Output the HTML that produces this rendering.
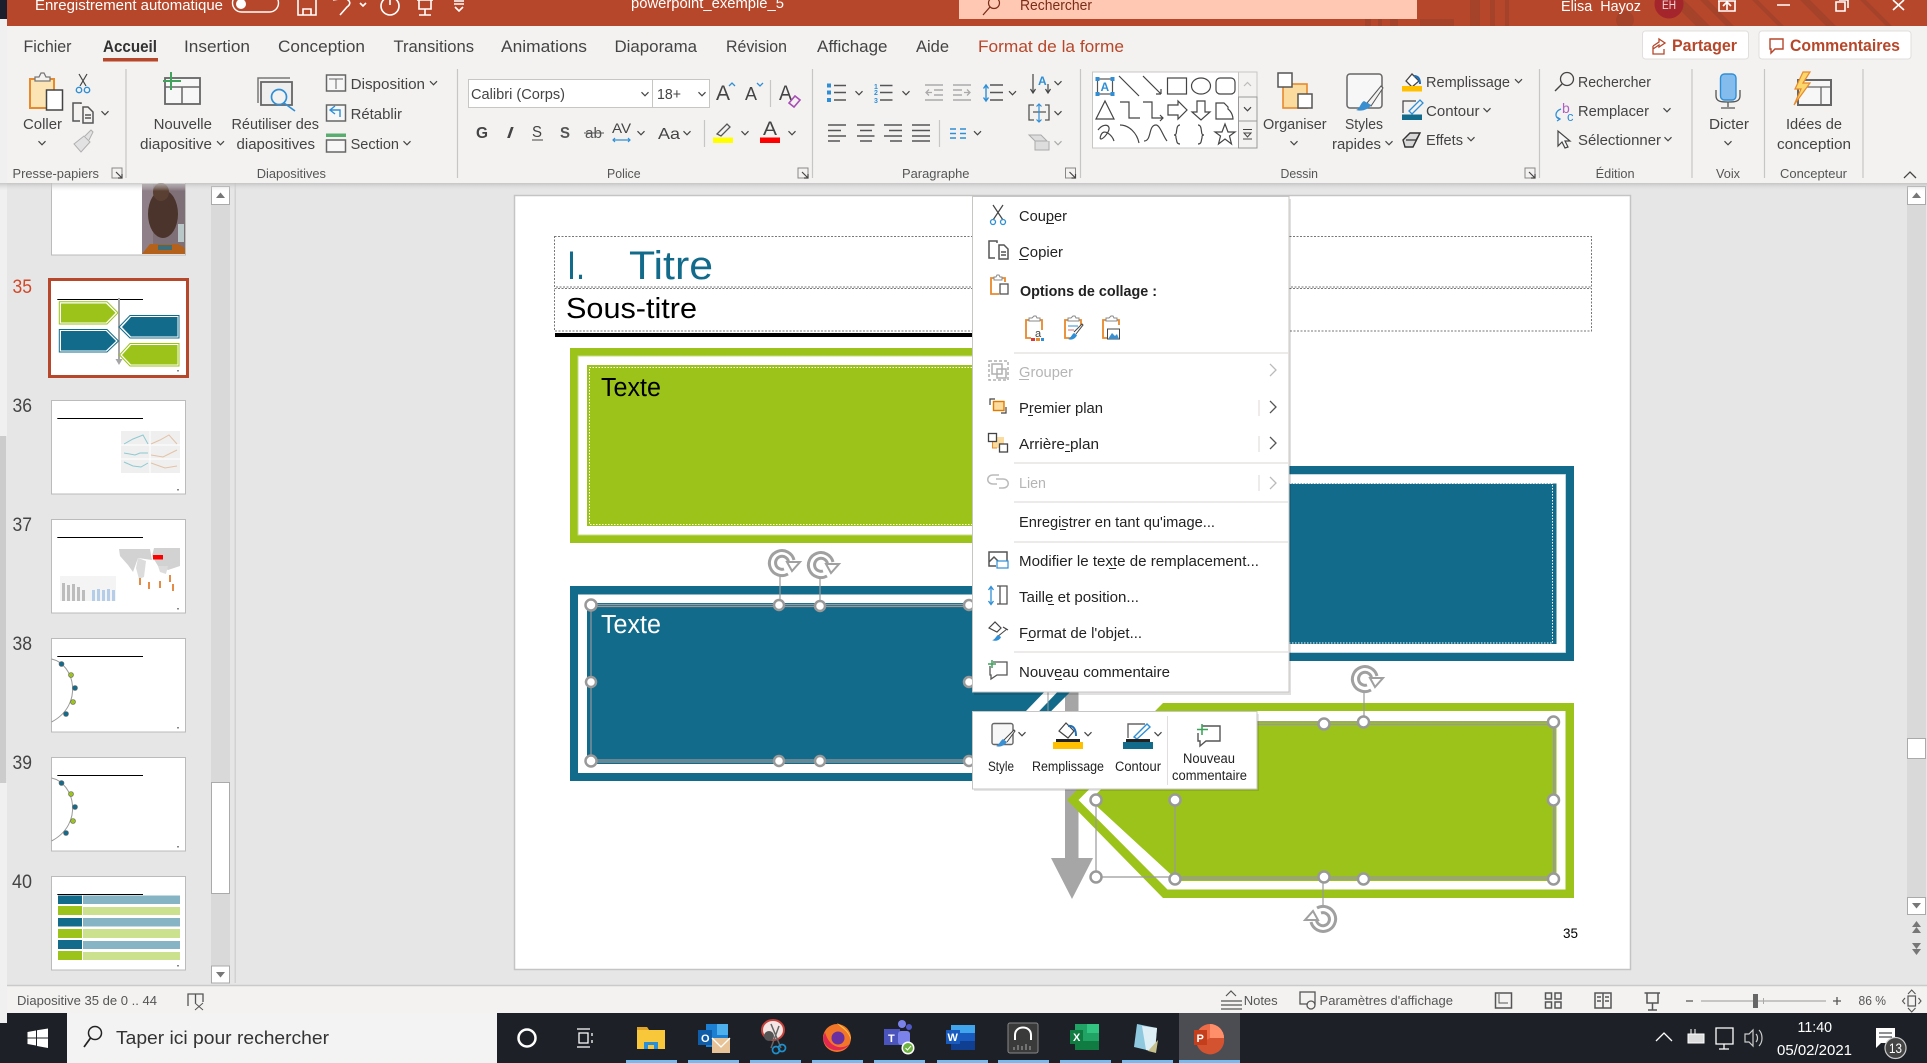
<!DOCTYPE html>
<html lang="fr"><head><meta charset="utf-8"><title>powerpoint_exemple_5</title>
<style>
html,body{margin:0;padding:0;background:#e6e6e6;overflow:hidden;width:1927px;height:1063px}
svg{display:block;position:absolute;left:0;top:0}
text{font-family:"Liberation Sans",sans-serif;white-space:pre}
.r{font-size:15px;fill:#444}
.tb{font-size:17px;fill:#444}
.g{font-size:13px;fill:#555}
.m{font-size:15px;fill:#222}
.d{font-size:15px;fill:#b5b5b5}
.w{font-size:14.5px;fill:#fff}
.s{font-size:13px;fill:#555}
.mt{font-size:13.5px;fill:#222}
.ic{fill:none;stroke:#555;stroke-width:1.5}
.ig{fill:none;stroke:#b0b0b0;stroke-width:1.5}
.wi{fill:none;stroke:#fff;stroke-width:1.6}
.hd{fill:#fff;stroke:#999;stroke-width:2.5}
.ln{stroke:#999;stroke-width:1.2;fill:none}
</style></head><body>
<svg width="1927" height="1063" viewBox="0 0 1927 1063">
<defs>
<path id="c" d="M-3.5-1.8 0 1.8 3.5-1.8" fill="none" stroke="#444" stroke-width="1.2"/>
<path id="cg" d="M-3.5-1.8 0 1.8 3.5-1.8" fill="none" stroke="#aaa" stroke-width="1.2"/>
<g id="launch"><rect x="-5" y="-5" width="10" height="10" fill="none" stroke="#888" stroke-width="1"/><path d="M-1-1 5 5M5 1V5H1" fill="none" stroke="#444" stroke-width="1.2"/></g>
<g id="rot"><circle r="13" fill="#fff"/><path d="M12-3A12.500 12.500 0 1 0 6 11" fill="none" stroke="#a0a0a0" stroke-width="3"/><path d="M6.500-1A6.500 6.500 0 1 0 2 6" fill="none" stroke="#a0a0a0" stroke-width="3"/><path d="M5-1H18L10 8Z" fill="#fff" stroke="#a0a0a0" stroke-width="2"/></g>
<g id="rotl"><circle r="13" fill="#fff"/><path d="M-12 3A12.500 12.500 0 1 0-6-11" fill="none" stroke="#a0a0a0" stroke-width="3"/><path d="M-6.500 1A6.500 6.500 0 1 0-2-6" fill="none" stroke="#a0a0a0" stroke-width="3"/><path d="M-5 1H-18L-10-8Z" fill="#fff" stroke="#a0a0a0" stroke-width="2"/></g>
<path id="sub" d="M-3-6 3 0-3 6" fill="none" stroke="#555" stroke-width="1.3"/>
<path id="subg" d="M-3-6 3 0-3 6" fill="none" stroke="#bbb" stroke-width="1.3"/>
<linearGradient id="sh" x1="0" y1="0" x2="0" y2="1"><stop offset="0" stop-color="#bdbdbd" stop-opacity=".8"/><stop offset="1" stop-color="#e6e6e6" stop-opacity="0"/></linearGradient>
</defs>

<!-- base -->
<rect width="1927" height="1063" fill="#e6e6e6"/>
<rect x="0" y="0" width="7" height="19" fill="#1c1e2e"/>
<rect x="0" y="19" width="7" height="417" fill="#f0f0f0"/>
<rect x="0" y="436" width="6" height="347" fill="#cccccc"/>
<rect x="0" y="783" width="7" height="240" fill="#f0f0f0"/>

<!-- side panel scrollbar -->
<rect x="211" y="186" width="19" height="797" fill="#d9d9d9"/>
<rect x="211.500" y="186.500" width="18" height="18" fill="#fff" stroke="#aaa"/><path d="M216 198H225L220.500 192.500Z" fill="#777"/>
<rect x="211.500" y="782.500" width="18" height="111" fill="#fff" stroke="#aaa"/>
<rect x="211.500" y="966" width="18" height="17" fill="#fff" stroke="#aaa"/><path d="M216 972H225L220.500 977.500Z" fill="#777"/>
<rect x="234.500" y="183" width="1.500" height="800" fill="#d2d2d2"/>

<!-- thumbnails -->
<rect x="51.500" y="183" width="134" height="72" fill="#fff"/><path d="M51.500 183V255H185.500V183" fill="none" stroke="#bbb"/>
<rect x="142" y="184" width="43" height="70" fill="#7f7078"/><rect x="142" y="184" width="11" height="70" fill="#8e7f89"/>
<ellipse cx="163" cy="214" rx="15" ry="24" fill="#4a342c"/><ellipse cx="161" cy="192" rx="8" ry="9" fill="#5a4032"/><path d="M142 254 150 244H178L185 248V254Z" fill="#b3611b"/><path d="M158 245H172V250H158Z" fill="#3d6e7a"/><rect x="178" y="224" width="6" height="18" fill="#b9c7c8"/>
<rect x="49.500" y="279.500" width="138" height="97" fill="#fff" stroke="#b7472a" stroke-width="3"/>
<g fill="#fff" stroke="#bbb"><rect x="51.500" y="400.500" width="134" height="93.500"/><rect x="51.500" y="519.500" width="134" height="93.500"/><rect x="51.500" y="638.500" width="134" height="93.500"/><rect x="51.500" y="757.500" width="134" height="93.500"/><rect x="51.500" y="876.500" width="134" height="93.500"/></g>
<g fill="#444">
<text x="12.500" y="293" textLength="19.500" lengthAdjust="spacingAndGlyphs" style="font-size:19px;fill:#d24726">35</text>
<text x="12.500" y="412" textLength="19.500" lengthAdjust="spacingAndGlyphs" style="font-size:19px">36</text>
<text x="12.500" y="531" textLength="19.500" lengthAdjust="spacingAndGlyphs" style="font-size:19px">37</text>
<text x="12.500" y="650" textLength="19.500" lengthAdjust="spacingAndGlyphs" style="font-size:19px">38</text>
<text x="12.500" y="769" textLength="19.500" lengthAdjust="spacingAndGlyphs" style="font-size:19px">39</text>
<text x="12" y="888" textLength="20" lengthAdjust="spacingAndGlyphs" style="font-size:19px">40</text>
</g>
<path d="M57.300 299.500H143M57.300 418.500H143M57.300 537.500H143M57.300 656.500H143M57.300 775.500H143M57.300 894.500H143" stroke="#000"/>
<!-- t35 -->
<rect x="118" y="298" width="2" height="62" fill="#a6a6a6"/><path d="M115.500 359H122.500L119 365Z" fill="#a6a6a6"/>
<path d="M59.300 301.700H107L118 312.800 107 324H59.300Z" fill="#fff" stroke="#9bc31a"/><path d="M61 303.500H106L115.500 312.800 106 322.500H61Z" fill="#9bc31a"/>
<path d="M59.300 329.500H107L118.500 341 107 352H59.300Z" fill="#fff" stroke="#136b8b"/><path d="M61 331H106L116 341 106 350.500H61Z" fill="#136b8b"/>
<path d="M179 315.500H130L119 327 130 338H179Z" fill="#fff" stroke="#136b8b"/><path d="M177.500 317H131L122 327 131 336.500H177.500Z" fill="#136b8b"/>
<path d="M179 343.500H130L119.500 355 130 366H179Z" fill="#fff" stroke="#9bc31a"/><path d="M177.500 345H131L122 355 131 364.500H177.500Z" fill="#9bc31a"/>
<!-- t36 -->
<rect x="121" y="431" width="59" height="42" fill="#efefef"/><path d="M121 445H180M121 459H180M150 431V473" stroke="#fff"/>
<path d="M124 444 133 439 143 435 148 444" fill="none" stroke="#8ccad0"/><path d="M151 444 160 440 169 435 177 444" fill="none" stroke="#e4c2a6"/><path d="M124 453 135 455 140 453 148 453" fill="none" stroke="#8ccad0"/><path d="M151 455 163 457 177 450" fill="none" stroke="#e4c2a6"/><path d="M124 462 133 466 141 467 148 463" fill="none" stroke="#8ccad0"/><path d="M151 463 165 468 177 466" fill="none" stroke="#e4c2a6"/>
<!-- t37 -->
<path d="M119 549H150L152 560 138 558 133 572 128 565 120 556ZM154 548H180V566L168 570 158 566 152 556Z" fill="#d2d2d2"/>
<path d="M138 558 146 561 144 577 139 579 136 568ZM158 566H168L166 574 160 572Z" fill="#dcdcdc"/>
<rect x="153" y="555" width="10" height="4.500" fill="#f00"/>
<g fill="#e58b45"><rect x="139" y="578" width="2" height="7"/><rect x="148" y="582" width="2" height="7"/><rect x="159" y="581" width="2" height="7"/><rect x="169" y="575" width="2" height="7"/><rect x="172" y="584" width="2" height="7"/></g>
<rect x="60" y="576" width="56" height="25" fill="#f4f4f4"/>
<g fill="#bcbcbc"><rect x="62" y="583" width="3" height="18"/><rect x="67" y="585" width="3" height="16"/><rect x="72" y="584" width="3" height="17"/><rect x="77" y="587" width="3" height="14"/><rect x="82" y="590" width="3" height="11"/></g>
<g fill="#b5cde8"><rect x="92" y="590" width="3" height="11"/><rect x="97" y="589" width="3" height="12"/><rect x="102" y="590" width="3" height="11"/><rect x="107" y="589" width="3" height="12"/><rect x="112" y="590" width="3" height="11"/></g>
<!-- t38,39 -->
<g fill="none" stroke="#999"><path d="M51.500 659C75 664 84 705 51.500 722"/><path d="M51.500 778C75 783 84 824 51.500 841"/></g>
<g stroke="#666" stroke-width=".6">
<circle cx="61.500" cy="664" r="2.500" fill="#136b8b"/><circle cx="71" cy="675" r="2.500" fill="#9bc31a"/><circle cx="75" cy="688" r="2.500" fill="#136b8b"/><circle cx="73" cy="702" r="2.500" fill="#9bc31a"/><circle cx="66" cy="714" r="2.500" fill="#136b8b"/>
<circle cx="61.500" cy="783" r="2.500" fill="#136b8b"/><circle cx="71" cy="794" r="2.500" fill="#9bc31a"/><circle cx="75" cy="807" r="2.500" fill="#136b8b"/><circle cx="73" cy="821" r="2.500" fill="#9bc31a"/><circle cx="66" cy="833" r="2.500" fill="#136b8b"/>
</g>
<!-- t40 -->
<g>
<rect x="58" y="895.500" width="24" height="8.500" fill="#136b8b"/><rect x="83" y="895.500" width="97" height="8.500" fill="#86b4c5"/>
<rect x="58" y="906" width="24" height="9" fill="#9bc31a"/><rect x="83" y="907" width="97" height="8" fill="#cce18d"/>
<rect x="58" y="918" width="24" height="8.500" fill="#136b8b"/><rect x="83" y="918" width="97" height="8.500" fill="#86b4c5"/>
<rect x="58" y="929" width="24" height="9" fill="#9bc31a"/><rect x="83" y="929" width="97" height="9" fill="#cce18d"/>
<rect x="58" y="940" width="24" height="9" fill="#136b8b"/><rect x="83" y="941" width="97" height="8" fill="#86b4c5"/>
<rect x="58" y="951" width="24" height="9" fill="#9bc31a"/><rect x="83" y="952" width="97" height="8" fill="#cce18d"/>
</g>
<g fill="#888"><rect x="177" y="370" width="2" height="1.500"/><rect x="177" y="489" width="2" height="1.500"/><rect x="177" y="608" width="2" height="1.500"/><rect x="177" y="727" width="2" height="1.500"/><rect x="177" y="846" width="2" height="1.500"/><rect x="177" y="965" width="2" height="1.500"/></g>

<!-- slide -->
<rect x="514.500" y="195.500" width="1116" height="774" fill="#fff" stroke="#c4c4c4" stroke-width="1.500"/>
<g fill="none" stroke="#777" stroke-width="1" stroke-dasharray="2 1.500">
<rect x="554.500" y="236.500" width="1037" height="50.500"/><rect x="554.500" y="288.500" width="1037" height="42.500"/>
</g>
<text x="567" y="279" style="font-size:40px;fill:#136b8b" textLength="18" lengthAdjust="spacingAndGlyphs">I.</text>
<text x="629" y="279" style="font-size:40px;fill:#136b8b" textLength="84" lengthAdjust="spacingAndGlyphs">Titre</text>
<text x="566" y="318" style="font-size:29px;fill:#000" textLength="131" lengthAdjust="spacingAndGlyphs">Sous-titre</text>
<rect x="555" y="333" width="730" height="4" fill="#000"/>
<!-- arrow -->
<rect x="1065" y="540" width="13.500" height="320" fill="#a6a6a6"/><path d="M1051 858H1093L1072 899Z" fill="#a6a6a6"/>
<!-- green frame 1 -->
<path d="M570 348H1080V543H570Z" fill="#9bc31a"/><rect x="578" y="356" width="500" height="179" fill="#fff" stroke="#c7dc80"/><rect x="587" y="365" width="480" height="161" fill="#9bc31a"/>
<rect x="589.500" y="367.500" width="470" height="157" fill="none" stroke="#fff" stroke-dasharray="1.500 1.500"/>
<text x="601" y="396" style="font-size:25.500px;fill:#000" textLength="60" lengthAdjust="spacingAndGlyphs">Texte</text>
<!-- teal left -->
<path d="M570 586H982L1079 683 982 781H570Z" fill="#136b8b"/>
<path d="M578 594.500H980L1066 683 980 773H578Z" fill="#fff"/>
<path d="M587 603H975L1053 683 975 764H587Z" fill="#136b8b"/>
<path d="M1048 692V712" stroke="#999"/>
<path class="ln" d="M589 604.500H972M589 606.500H972M589 760H972M589 762H972"/>
<path class="ln" d="M591 605V761"/>
<text x="601" y="633" style="font-size:25.500px;fill:#fff" textLength="60" lengthAdjust="spacingAndGlyphs">Texte</text>
<path class="ln" d="M780 577V605M820 578V606"/>
<use href="#rot" x="782" y="563"/><use href="#rot" x="821" y="565"/>
<circle class="hd" cx="591" cy="605" r="5.500"/><circle class="hd" cx="779" cy="605" r="5"/><circle class="hd" cx="820" cy="606" r="5"/><circle class="hd" cx="969" cy="605" r="5"/>
<circle class="hd" cx="591" cy="682" r="5"/><circle class="hd" cx="969" cy="682" r="5"/>
<circle class="hd" cx="591" cy="761" r="5.500"/><circle class="hd" cx="779" cy="761" r="5"/><circle class="hd" cx="820" cy="761" r="5"/><circle class="hd" cx="969" cy="761" r="5"/>
<!-- teal right -->
<rect x="1200" y="466" width="374" height="195" fill="#136b8b"/>
<rect x="1200" y="474.500" width="365.500" height="178" fill="#fff" stroke="#cfe0e7" stroke-width=".8"/>
<rect x="1200" y="483.500" width="356.500" height="160.500" fill="#136b8b"/>
<path d="M1200 483.500H1552.500V643H1200" fill="none" stroke="#fff" stroke-dasharray="1.500 1.500"/>
<!-- green right -->
<path d="M1067 800 1163 703H1574V898H1163Z" fill="#9bc31a"/>
<path d="M1078.500 800 1167.500 711H1565.500V889.500H1167.500Z" fill="#fff"/>
<path d="M1090 800 1172 721H1556.500V881H1178Z" fill="#9bc31a"/>
<path class="ln" d="M1172 722H1553.500M1172 724.500H1553.500M1096 877H1175M1175 877H1553.500M1175 879H1553.500M1096 800V877M1175 800V879"/>
<path d="M1553.500 722V879M1555 722V879" stroke="#999" stroke-width="1.200"/>
<path class="ln" d="M1364 691V722M1323 878V907"/>
<use href="#rot" x="1365" y="679"/><use href="#rotl" x="1323" y="919"/>
<circle class="hd" cx="1324" cy="724" r="5.500"/><circle class="hd" cx="1363.500" cy="722" r="5.500"/><circle class="hd" cx="1553.500" cy="722" r="5.500"/>
<circle class="hd" cx="1096" cy="800" r="5.500"/><circle class="hd" cx="1175" cy="800" r="5.500"/><circle class="hd" cx="1553.500" cy="800" r="5.500"/>
<circle class="hd" cx="1096" cy="877" r="5.500"/><circle class="hd" cx="1175" cy="879" r="5.500"/><circle class="hd" cx="1324" cy="877" r="5.500"/><circle class="hd" cx="1363.500" cy="879" r="5.500"/><circle class="hd" cx="1553.500" cy="879" r="5.500"/>
<text x="1563" y="938" style="font-size:13.500px;fill:#000" textLength="15" lengthAdjust="spacingAndGlyphs">35</text>

<!-- context menu -->
<rect x="974" y="199" width="317" height="496" fill="#000" opacity=".12"/>
<rect x="972.500" y="196.500" width="316.500" height="495.500" fill="#fff" stroke="#c8c6c4"/>
<g stroke="#e1dfdd" stroke-width="1.200"><path d="M1014 353H1288M1014 463H1288M1014 502H1288M1014 542H1288M1014 652H1288"/><path d="M1259 400V416M1259 436V452M1259 475V491"/></g>
<text class="m" x="1019" y="221" textLength="48" lengthAdjust="spacingAndGlyphs">Couper</text><path d="M1046 223.500H1054" stroke="#222"/>
<text class="m" x="1019" y="257" textLength="44" lengthAdjust="spacingAndGlyphs">Copier</text><path d="M1019 259.500H1028" stroke="#222"/>
<text class="m" x="1020" y="296" textLength="137" lengthAdjust="spacingAndGlyphs" style="font-weight:bold">Options de collage :</text>
<text class="d" x="1019" y="377" textLength="54" lengthAdjust="spacingAndGlyphs">Grouper</text><path d="M1019 379.500H1029" stroke="#b5b5b5"/>
<text class="m" x="1019" y="413" textLength="84" lengthAdjust="spacingAndGlyphs">Premier plan</text><path d="M1028 415.500H1033" stroke="#222"/>
<text class="m" x="1019" y="449" textLength="80" lengthAdjust="spacingAndGlyphs">Arrière-plan</text><path d="M1065 451.500H1070" stroke="#222"/>
<text class="d" x="1019" y="488" textLength="27" lengthAdjust="spacingAndGlyphs">Lien</text>
<text class="m" x="1019" y="527" textLength="196" lengthAdjust="spacingAndGlyphs">Enregistrer en tant qu'image...</text><path d="M1060 529.500H1066" stroke="#222"/>
<text class="m" x="1019" y="566" textLength="240" lengthAdjust="spacingAndGlyphs">Modifier le texte de remplacement...</text><path d="M1109 568.500H1116" stroke="#222"/>
<text class="m" x="1019" y="602" textLength="120" lengthAdjust="spacingAndGlyphs">Taille et position...</text><path d="M1048 604.500H1054" stroke="#222"/>
<text class="m" x="1019" y="638" textLength="123" lengthAdjust="spacingAndGlyphs">Format de l'objet...</text><path d="M1027 640.500H1034" stroke="#222"/>
<text class="m" x="1019" y="677" textLength="151" lengthAdjust="spacingAndGlyphs">Nouveau commentaire</text><path d="M1055 679.500H1062" stroke="#222"/>
<use href="#subg" x="1273" y="370"/><use href="#sub" x="1273" y="407"/><use href="#sub" x="1273" y="443"/><use href="#subg" x="1273" y="483"/>
<!-- menu icons -->
<path d="M993 205 1003 220M1003 205 993 220" stroke="#444" fill="none" stroke-width="1.200"/><circle cx="993" cy="222" r="2.500" fill="none" stroke="#2f8fd6" stroke-width="1.300"/><circle cx="1003" cy="222" r="2.500" fill="none" stroke="#2f8fd6" stroke-width="1.300"/>
<path class="ic" d="M995 258H989V241H997V243M999 245H1004L1008 249V259H999ZM1001 252H1006M1001 255H1006"/>
<path d="M995 278H991V294H999M1001 278H1005V282" fill="none" stroke="#e8892b" stroke-width="1.800"/>
<path d="M994 280V277H996L997 275H999L1000 277H1002V280Z" fill="#fff" stroke="#888"/>
<rect x="1000" y="284" width="8" height="10" fill="#fff" stroke="#555" stroke-width="1.300"/>
<g><path d="M1030 320H1026V338H1031M1038 320H1042V330" fill="none" stroke="#e8892b" stroke-width="1.800"/><path d="M1029 321V318H1032L1034 316H1036L1037 318H1040V321Z" fill="#fff" stroke="#888"/><text x="1035" y="337" style="font-size:11px;fill:#444">a</text><rect x="1031" y="338" width="4" height="3" fill="#d83b3b"/><rect x="1036" y="338" width="4" height="3" fill="#e8892b"/><rect x="1041" y="338" width="3" height="3" fill="#2f8fd6"/></g>
<g><path d="M1069 320H1065V338H1072M1077 320H1081V325" fill="none" stroke="#e8892b" stroke-width="1.800"/><path d="M1068 321V318H1071L1073 316H1075L1076 318H1079V321Z" fill="#fff" stroke="#888"/><path d="M1068 326H1078" stroke="#2f8fd6"/><path d="M1068 330H1074" stroke="#e06a6a"/><path d="M1076 334 1083 325 1082 324 1074 332" fill="#fff" stroke="#444"/><path d="M1068 339C1071 338 1072 334 1074 333L1077 335C1076 338 1072 341 1068 339Z" fill="#2f8fd6"/></g>
<g><path d="M1107 320H1103V338H1107M1115 320H1119V325" fill="none" stroke="#e8892b" stroke-width="1.800"/><path d="M1106 321V318H1109L1111 316H1113L1114 318H1117V321Z" fill="#fff" stroke="#888"/><rect x="1107.500" y="329" width="12" height="10" fill="#fff" stroke="#444"/><path d="M1108 339 1112 333 1115 336 1117 334 1119 339Z" fill="#3a8fd1"/></g>
<rect x="989" y="361" width="19" height="19" class="ig" stroke-dasharray="3 2"/><rect x="992" y="364" width="10" height="10" class="ig"/><rect x="997" y="369" width="9" height="9" class="ig"/>
<path d="M995 399H990V405M1001 413H1006V407" fill="none" stroke="#444" stroke-width="1.200"/><rect x="993.500" y="401.500" width="10.500" height="9" fill="#fbdc9e" stroke="#e07b00" stroke-width="1.400"/>
<rect x="993" y="437" width="11" height="11" fill="#fbdc9e"/><path d="M992.500 442V448H997" fill="none" stroke="#e8892b"/><rect x="988.500" y="433.500" width="8" height="8" fill="#fff" stroke="#444" stroke-width="1.300"/><rect x="999.500" y="444" width="8" height="8" fill="#fff" stroke="#444" stroke-width="1.300"/>
<path d="M999 475H993C986 475 986 484 993 484H997M996 479H1003C1010 479 1010 488 1003 488H999" fill="none" stroke="#bbb" stroke-width="1.500"/>
<path class="ic" d="M996 566H989V552H1007V561M989 562 994 557 998 561"/><rect x="997" y="561" width="11" height="7" fill="#fff" stroke="#2f8fd6" stroke-width="1.200"/>
<path d="M991 587V604" stroke="#2f8fd6" stroke-width="1.300"/><path d="M988.500 590 991 586.500 993.500 590M988.500 601 991 604.500 993.500 601" fill="none" stroke="#2f8fd6" stroke-width="1.300"/>
<path d="M997 586H1007V604H997M1000 586V604" fill="none" stroke="#555" stroke-width="1.300"/>
<path d="M989 628 995 622 1001 628 997 632ZM1003 627 1008 630" fill="#fff" stroke="#444" stroke-width="1.200"/><path d="M997 637 1007 629" stroke="#444"/><path d="M992 640C995 640 996 636 998 635L1001 637C1000 640 996 642 992 640Z" fill="#2f8fd6"/>
<path d="M993 662H1007V675H997L991 679V675H990V666" fill="none" stroke="#555" stroke-width="1.300"/><path d="M992 660V668M988 664H996" stroke="#3fa35c" stroke-width="1.500"/>

<!-- mini toolbar -->
<rect x="974" y="714" width="285" height="77" fill="#000" opacity=".1"/>
<rect x="972.500" y="711.500" width="284.500" height="77.500" fill="#fff" stroke="#c8c6c4"/>
<path d="M1167.500 716V785" stroke="#e1dfdd"/>
<rect x="992" y="723.500" width="21" height="21" rx="2" fill="#f7f7f7" stroke="#666" stroke-width="1.400"/>
<path d="M1004 740 1014 730 1015 731 1007 742" fill="#fff" stroke="#444"/><path d="M996 746C999 745 1000 741 1003 739L1007 742C1005 745 1000 748 996 746Z" fill="#3a8fd1"/>
<use href="#c" x="1022" y="734"/>
<text class="mt" x="988" y="771" textLength="26" lengthAdjust="spacingAndGlyphs">Style</text>
<path d="M1059 731 1066 723 1074 731 1068 738Z" fill="#fff" stroke="#444" stroke-width="1.200"/><path d="M1068 726C1074 725 1076 730 1076 736" fill="none" stroke="#1e6fb8" stroke-width="2"/>
<rect x="1056" y="739" width="24" height="3" fill="#222"/><rect x="1053" y="742" width="30" height="7" fill="#ffc000"/>
<use href="#c" x="1088" y="734"/>
<text class="mt" x="1032" y="771" textLength="72" lengthAdjust="spacingAndGlyphs">Remplissage</text>
<path d="M1128 738V724H1145" fill="none" stroke="#666" stroke-width="1.400"/><path d="M1134 737 1147 724 1150 727 1137 739Z" fill="none" stroke="#2f8fd6" stroke-width="1.400"/>
<rect x="1126" y="739" width="24" height="3" fill="#222"/><rect x="1123" y="742" width="30" height="7" fill="#136b8b"/>
<use href="#c" x="1158" y="734"/>
<text class="mt" x="1115" y="771" textLength="46" lengthAdjust="spacingAndGlyphs">Contour</text>
<path d="M1202 726H1220V741H1206L1200 746V741H1198V733" fill="none" stroke="#555" stroke-width="1.400"/><path d="M1202 724V735M1197 729.500H1208" stroke="#3fa35c" stroke-width="1.600"/>
<text class="mt" x="1183" y="763" textLength="52" lengthAdjust="spacingAndGlyphs">Nouveau</text>
<text class="mt" x="1172" y="780" textLength="75" lengthAdjust="spacingAndGlyphs">commentaire</text>

<!-- right scrollbar -->
<rect x="1907" y="186" width="19" height="711" fill="#d9d9d9"/>
<rect x="1907.500" y="186.500" width="18" height="18" fill="#fff" stroke="#aaa"/><path d="M1912 198H1921L1916.500 192.500Z" fill="#777"/>
<rect x="1907.500" y="738.500" width="18" height="20" fill="#fff" stroke="#aaa"/>
<rect x="1907.500" y="897.500" width="18" height="17" fill="#fff" stroke="#aaa"/><path d="M1912 903H1921L1916.500 908.500Z" fill="#777"/>
<path d="M1912 927H1921L1916.500 921ZM1912 933H1921L1916.500 927Z" fill="#777"/>
<path d="M1912 943H1921L1916.500 949ZM1912 949H1921L1916.500 955Z" fill="#777"/>

<!-- title bar -->
<rect x="7" width="1920" height="26" fill="#b7472a"/>
<g fill="#a5422a">
<rect x="1365" width="6" height="26"/><rect x="1378" width="4" height="26"/><rect x="1390" width="8" height="26"/><rect x="1420" y="19" width="34" height="7"/><rect x="1470" width="10" height="26"/><rect x="1490" width="5" height="26"/><rect x="1505" width="4" height="26"/>
<path d="M1670 0h14l26 26h-14zM1700 0h8l26 26h-8zM1752 0h6l26 26h-6zM1800 0h10l26 26h-10zM1860 0h6l26 26h-6z"/>
<circle cx="1625" cy="20" r="9"/>
</g>
<text class="w" x="35" y="10" textLength="188" lengthAdjust="spacingAndGlyphs">Enregistrement automatique</text>
<rect x="232.500" y="-6" width="46" height="18" rx="9" fill="none" stroke="#fff" stroke-width="1.400"/><circle cx="241" cy="4" r="5" fill="#fff"/>
<path class="wi" d="M298 0V15H316V0M303 15V9H311V15"/>
<path class="wi" d="M333 0l12-2c6 3 6 6 2 9l-7 8"/>
<path class="wi" stroke-width="1.200" d="M360 3l3 3 3-3"/>
<circle class="wi" cx="390" cy="6" r="9"/><path class="wi" d="M390-3V5"/>
<path class="wi" d="M417 0H433M419 0V9H431V0M425 9V15M419 15H431"/>
<path class="wi" stroke-width="1.100" d="M454 1H464M454 4H464M455 7l4 4 4-4"/>
<text class="w" x="631" y="8" textLength="153" lengthAdjust="spacingAndGlyphs">powerpoint_exemple_5</text>
<rect x="959" width="458" height="19" fill="#ffc8b2"/>
<circle cx="994" cy="3" r="5.500" fill="none" stroke="#7a2d18" stroke-width="1.200"/><path d="M990 7 983 15" stroke="#7a2d18" stroke-width="1.300"/>
<text x="1020" y="10" fill="#7a2d18" textLength="72" lengthAdjust="spacingAndGlyphs" style="font-size:14.500px">Rechercher</text>
<text class="w" x="1561" y="11" textLength="80" lengthAdjust="spacingAndGlyphs">Elisa  Hayoz</text>
<circle cx="1669" cy="4" r="14.500" fill="#a4262c"/>
<text x="1662" y="9" fill="#f3d6d6" textLength="14" lengthAdjust="spacingAndGlyphs" style="font-size:11.500px">EH</text>
<path class="wi" d="M1719 1V11H1735V1M1727 10V2M1723 6l4-4 4 4M1718 1H1736"/>
<path d="M1777 5H1790" stroke="#fff" stroke-width="1.500"/>
<path class="wi" d="M1836 2V11H1845V2ZM1839 0H1848V8"/>
<path class="wi" d="M1893 0 1904 10M1904 0 1893 10"/>

<!-- ribbon -->
<rect x="7" y="26" width="1920" height="157" fill="#f3f2f1"/>
<text class="tb" x="23.500" y="52" textLength="48" lengthAdjust="spacingAndGlyphs">Fichier</text>
<text class="tb" x="103" y="52" textLength="54" lengthAdjust="spacingAndGlyphs" style="font-weight:bold;fill:#333">Accueil</text>
<text class="tb" x="184" y="52" textLength="66" lengthAdjust="spacingAndGlyphs">Insertion</text>
<text class="tb" x="278" y="52" textLength="87" lengthAdjust="spacingAndGlyphs">Conception</text>
<text class="tb" x="393.500" y="52" textLength="80.500" lengthAdjust="spacingAndGlyphs">Transitions</text>
<text class="tb" x="501" y="52" textLength="86" lengthAdjust="spacingAndGlyphs">Animations</text>
<text class="tb" x="614.500" y="52" textLength="82.500" lengthAdjust="spacingAndGlyphs">Diaporama</text>
<text class="tb" x="726" y="52" textLength="61" lengthAdjust="spacingAndGlyphs">Révision</text>
<text class="tb" x="817" y="52" textLength="70.500" lengthAdjust="spacingAndGlyphs">Affichage</text>
<text class="tb" x="916" y="52" textLength="33" lengthAdjust="spacingAndGlyphs">Aide</text>
<text class="tb" x="978" y="52" textLength="146" lengthAdjust="spacingAndGlyphs" style="fill:#b7472a">Format de la forme</text>
<rect x="103" y="58" width="55" height="3.500" fill="#b7472a"/>
<rect x="1642.500" y="31" width="106" height="28" rx="3" fill="#fff" stroke="#e1dfdd"/>
<path d="M1653 46V54H1664V49M1653 46l6-4V39l6 4-6 4V45l-6 4" fill="none" stroke="#b7472a" stroke-width="1.300"/>
<text x="1672" y="51" textLength="65" lengthAdjust="spacingAndGlyphs" style="font-size:17px;font-weight:bold;fill:#b7472a">Partager</text>
<rect x="1759" y="31" width="152" height="28" rx="3" fill="#fff" stroke="#e1dfdd"/>
<path d="M1770 39H1783V49H1775L1771 53V49H1770Z" fill="none" stroke="#b7472a" stroke-width="1.400"/>
<text x="1790" y="51" textLength="110" lengthAdjust="spacingAndGlyphs" style="font-size:17px;font-weight:bold;fill:#b7472a">Commentaires</text>
<g stroke="#c8c6c4" stroke-width="1.200">
<path d="M126 69V178M457.500 69V178M812.500 69V178M1080.500 69V178M1539.500 69V178M1692 69V178M1764.500 69V178M1863 69V178"/>
<path d="M770.500 80V107M704.500 120V147M939.500 120V147"/>
</g>
<text class="g" x="12.500" y="178" textLength="86.500" lengthAdjust="spacingAndGlyphs">Presse-papiers</text>
<text class="g" x="256.700" y="178" textLength="69.300" lengthAdjust="spacingAndGlyphs">Diapositives</text>
<text class="g" x="607" y="178" textLength="33.600" lengthAdjust="spacingAndGlyphs">Police</text>
<text class="g" x="902" y="178" textLength="67.500" lengthAdjust="spacingAndGlyphs">Paragraphe</text>
<text class="g" x="1280.500" y="178" textLength="37.500" lengthAdjust="spacingAndGlyphs">Dessin</text>
<text class="g" x="1595.600" y="178" textLength="39" lengthAdjust="spacingAndGlyphs">Édition</text>
<text class="g" x="1716" y="178" textLength="24" lengthAdjust="spacingAndGlyphs">Voix</text>
<text class="g" x="1780" y="178" textLength="67" lengthAdjust="spacingAndGlyphs">Concepteur</text>
<use href="#launch" x="117" y="173"/><use href="#launch" x="803" y="173"/><use href="#launch" x="1070.500" y="173"/><use href="#launch" x="1530" y="173"/>
<path d="M1904 178 1910 172 1916 178" fill="none" stroke="#444" stroke-width="1.300"/>

<!-- presse-papiers -->
<rect x="30" y="79" width="24" height="29" fill="#fce4b5" stroke="#e8892b" stroke-width="2"/>
<path d="M35 81V77H39L41 73H44L46 77H50V81Z" fill="#f3f2f1" stroke="#777" stroke-width="1.300"/>
<rect x="46.500" y="90" width="16" height="20" fill="#fff" stroke="#444" stroke-width="1.500"/>
<text class="r" x="23" y="129" textLength="39" lengthAdjust="spacingAndGlyphs">Coller</text>
<use href="#c" x="42" y="143"/>
<path d="M79 74 86 86M87 74 80 86" stroke="#444" fill="none" stroke-width="1.200"/><circle cx="79" cy="90" r="2.700" fill="none" stroke="#2f8fd6" stroke-width="1.400"/><circle cx="87" cy="90" r="2.700" fill="none" stroke="#2f8fd6" stroke-width="1.400"/>
<path class="ic" d="M80 121H73V103H81V104M83 107H88L93 112V123H83ZM85 115H91M85 118H91"/>
<use href="#c" x="105" y="113"/>
<path d="M74 144 84 136 90 142 81 152ZM85 136 91 130 93 132 89 140" fill="#e2e2e2" stroke="#b0b0b0"/>

<!-- diapositives -->
<rect x="165" y="78" width="35" height="26" fill="#f7f7f7" stroke="#666" stroke-width="1.800"/>
<path d="M165 87H200M182 87V104" stroke="#666" stroke-width="1.500"/>
<path d="M171 72V90M163 81H181" stroke="#3fa35c" stroke-width="2"/>
<text class="r" x="153.600" y="129" textLength="58.400" lengthAdjust="spacingAndGlyphs">Nouvelle</text>
<text class="r" x="140" y="149" textLength="72" lengthAdjust="spacingAndGlyphs">diapositive</text>
<use href="#c" x="220.500" y="143"/>
<path d="M258 103V78H290" fill="none" stroke="#777" stroke-width="1.500"/>
<rect x="261" y="82" width="31" height="23" fill="#eee" stroke="#666" stroke-width="1.800"/>
<circle cx="279" cy="97" r="7.500" fill="#f3f2f1" stroke="#2f8fd6" stroke-width="1.700"/><path d="M284 103 295 111" stroke="#2f8fd6" stroke-width="1.700"/>
<text class="r" x="231.500" y="129" textLength="87.500" lengthAdjust="spacingAndGlyphs">Réutiliser des</text>
<text class="r" x="236.500" y="149" textLength="78.500" lengthAdjust="spacingAndGlyphs">diapositives</text>
<rect x="326.500" y="75" width="19" height="16" fill="#f7f7f7" stroke="#666" stroke-width="1.500"/><path d="M329 79H343M336 79V89" stroke="#666" stroke-width="1"/>
<text class="r" x="350.600" y="89" textLength="74.400" lengthAdjust="spacingAndGlyphs">Disposition</text><use href="#c" x="433.500" y="83"/>
<rect x="326.500" y="105" width="19" height="16" fill="#f7f7f7" stroke="#666" stroke-width="1.500"/><path d="M335 106 330 110 335 114M330 110H340V117" fill="none" stroke="#2f8fd6" stroke-width="1.400"/>
<text class="r" x="350.600" y="119" textLength="51.400" lengthAdjust="spacingAndGlyphs">Rétablir</text>
<rect x="326" y="133.500" width="20" height="3.500" fill="#59ad6e"/><rect x="326.500" y="140" width="19" height="12" fill="#f7f7f7" stroke="#666" stroke-width="1.500"/>
<text class="r" x="350.600" y="149" textLength="48.400" lengthAdjust="spacingAndGlyphs">Section</text><use href="#c" x="407" y="143"/>

<!-- police -->
<rect x="468.500" y="79.500" width="184" height="28" fill="#fff" stroke="#c8c6c4"/>
<rect x="652.500" y="79.500" width="57" height="28" fill="#fff" stroke="#c8c6c4"/>
<text class="r" x="471" y="99" textLength="94" lengthAdjust="spacingAndGlyphs">Calibri (Corps)</text><use href="#c" x="645" y="94"/>
<text class="r" x="657" y="99" textLength="24" lengthAdjust="spacingAndGlyphs">18+</text><use href="#c" x="702" y="94"/>
<text x="716" y="100" textLength="14" lengthAdjust="spacingAndGlyphs" style="font-size:21px;fill:#444">A</text><path d="M729 86 732 83 735 86" fill="none" stroke="#2f8fd6" stroke-width="1.300"/>
<text x="745" y="100" textLength="12" lengthAdjust="spacingAndGlyphs" style="font-size:18px;fill:#444">A</text><path d="M757 83 760 86 763 83" fill="none" stroke="#2f8fd6" stroke-width="1.300"/>
<text x="779" y="100" textLength="13" lengthAdjust="spacingAndGlyphs" style="font-size:21px;fill:#444">A</text><path d="M789 103 795 96 800 100 794 107Z" fill="none" stroke="#a84db5" stroke-width="1.600"/>
<text x="476" y="138" textLength="12" lengthAdjust="spacingAndGlyphs" style="font-size:16px;font-weight:bold;fill:#444">G</text>
<text x="506" y="138" textLength="8" lengthAdjust="spacingAndGlyphs" style="font-size:16px;font-style:italic;fill:#444">I</text>
<text x="532" y="137" textLength="10" lengthAdjust="spacingAndGlyphs" style="font-size:16px;fill:#444">S</text><path d="M532 140H543" stroke="#444"/>
<text x="560" y="138" textLength="10" lengthAdjust="spacingAndGlyphs" style="font-size:16px;font-weight:bold;fill:#555">S</text>
<text x="585" y="138" textLength="17" lengthAdjust="spacingAndGlyphs" style="font-size:15px;fill:#555">ab</text><path d="M584 133H604" stroke="#555"/>
<text x="612" y="133" textLength="19" lengthAdjust="spacingAndGlyphs" style="font-size:14px;fill:#444">AV</text><path d="M613 140H630M615 138l-2 2 2 2M628 138l2 2-2 2" fill="none" stroke="#2f8fd6" stroke-width="1.200"/>
<use href="#c" x="641" y="133"/>
<text x="658" y="139" textLength="22" lengthAdjust="spacingAndGlyphs" style="font-size:16px;fill:#444">Aa</text><use href="#c" x="687" y="133"/>
<path d="M717 134 727 124 730 127 721 136Z" fill="none" stroke="#555" stroke-width="1.300"/>
<rect x="713" y="137.500" width="20" height="5.500" fill="#ff0"/><use href="#c" x="745" y="133"/>
<text x="763" y="135" textLength="14" lengthAdjust="spacingAndGlyphs" style="font-size:19px;fill:#444">A</text>
<rect x="760" y="137.500" width="20" height="5.500" fill="#f00"/><use href="#c" x="792" y="133"/>

<!-- paragraphe -->
<g fill="#2f8fd6"><rect x="827" y="83.500" width="4" height="4"/><rect x="827" y="90.500" width="4" height="4"/><rect x="827" y="98" width="4" height="4"/></g>
<path d="M834 85.500H846M834 92.500H846M834 100H846" stroke="#555" stroke-width="1.600"/><use href="#c" x="859" y="93"/>
<text x="874" y="89" style="font-size:7px;fill:#2f8fd6;font-weight:bold">1</text><text x="874" y="95" style="font-size:7px;fill:#2f8fd6;font-weight:bold">2</text><text x="874" y="103" style="font-size:7px;fill:#2f8fd6;font-weight:bold">3</text>
<path d="M880 85.500H892.500M880 92.500H892.500M880 100H892.500" stroke="#555" stroke-width="1.600"/><use href="#c" x="906" y="93"/>
<path d="M925 85H943M934 90H943M934 95H943M925 100H943" stroke="#aaa" stroke-width="1.600"/><path d="M932 92.500H926M929 89.500 926 92.500 929 95.500" fill="none" stroke="#aaa" stroke-width="1.300"/>
<path d="M953 85H971M953 90H962M953 95H962M953 100H971" stroke="#aaa" stroke-width="1.600"/><path d="M964 92.500H970M967 89.500 970 92.500 967 95.500" fill="none" stroke="#aaa" stroke-width="1.300"/>
<path d="M990 85H1003M990 92.500H1003M990 100H1003" stroke="#555" stroke-width="1.600"/><path d="M986 86V100M983.500 88.500 986 85 988.500 88.500M983.500 97.500 986 101 988.500 97.500" fill="none" stroke="#2f8fd6" stroke-width="1.400"/><use href="#c" x="1012.500" y="93"/>
<path d="M1033 74V92M1030.500 89 1033 93 1035.500 89M1048 84V92M1045.500 89 1048 93 1050.500 89" fill="none" stroke="#444" stroke-width="1.200"/><text x="1038" y="85" style="font-size:12px;fill:#2f8fd6;font-weight:bold">A</text><use href="#c" x="1058" y="83"/>
<path d="M1034 105H1029V120H1034M1045 105H1049V120H1045M1033 112H1046" fill="none" stroke="#555" stroke-width="1.300"/><path d="M1039 104V122M1036.500 106.500 1039 104 1041.500 106.500M1036.500 119.500 1039 122 1041.500 119.500" fill="none" stroke="#2f8fd6" stroke-width="1.200"/><use href="#c" x="1058" y="113"/>
<path d="M1029 135H1041L1047 141H1035ZM1035 141V150H1049V141" fill="#ddd" stroke="#aaa"/><use href="#cg" x="1058" y="143"/>
<g stroke="#555" stroke-width="1.600">
<path d="M828 125H846M828 130.500H841M828 136H846M828 141H840"/>
<path d="M857 125H874.500M860 130.500H872M857 136H874.500M860 141H872"/>
<path d="M884 125H902M889 130.500H902M884 136H902M890 141H902"/>
<path d="M912 125H930M912 130.500H930M912 136H930M912 141H930"/>
</g>
<path d="M950 129H956M950 133.500H956M950 138H956M960 129H966M960 133.500H966M960 138H966" stroke="#2f8fd6" stroke-width="1.600"/><use href="#c" x="977.500" y="133"/>

<!-- dessin gallery -->
<rect x="1092.500" y="72" width="146" height="76" fill="#fff" stroke="#c8c6c4"/>
<rect x="1238.500" y="72" width="18.500" height="25" fill="#f3f2f1" stroke="#c8c6c4"/><rect x="1238.500" y="97" width="18.500" height="24" fill="#f3f2f1" stroke="#999"/><rect x="1238.500" y="121" width="18.500" height="27" fill="#f3f2f1" stroke="#999"/>
<path d="M1244 86 1247.500 82.500 1251 86" fill="none" stroke="#bbb" stroke-width="1.200"/><use href="#c" x="1247.500" y="109"/>
<path d="M1243 129.500H1252M1244 133 1247.500 137 1251 133H1244ZM1243 139H1252" fill="none" stroke="#444" stroke-width="1"/>
<g fill="none" stroke="#444" stroke-width="1.200">
<rect x="1097.500" y="79" width="15" height="15" stroke="#555"/>
<path d="M1119 76 1139 96M1143 76 1161 94M1161 94V89M1161 94H1156"/>
<rect x="1167.500" y="78" width="19" height="16"/><ellipse cx="1201" cy="86" rx="9.500" ry="8"/><rect x="1216" y="78" width="19" height="16" rx="4"/>
<path d="M1105 101 1114 119H1096ZM1120 102H1129V118H1140M1143 102H1152V118H1163M1160 115 1163 118 1160 121M1168 105H1178V101L1187 110 1178 119V115H1168ZM1197 101H1205V112H1210L1201 120 1192 112H1197ZM1216 103H1224L1228 107V109C1232 112 1233 117 1233 119H1216Z"/>
<path d="M1098 130C1104 122 1112 125 1108 132S1098 142 1101 135 1112 135 1114 141"/>
<path d="M1120 125C1129 125 1137 133 1139 143M1144 141C1152 141 1148 125 1156 125 1160 125 1163 136 1167 141"/>
<path d="M1180 125C1176 125 1177 132 1176 134 1175 135 1174 135 1174 135 1176 135 1176 136 1176 138 1177 140 1176 144 1180 144M1198 125C1202 125 1201 132 1202 134 1203 135 1204 135 1204 135 1202 135 1202 136 1202 138 1201 140 1202 144 1198 144"/>
<path d="M1225 124 1228 132H1235L1229.500 136 1231.500 144 1225 139 1218.500 144 1220.500 136 1215 132H1222Z"/>
</g>
<text x="1100.500" y="91" style="font-size:12px;font-weight:bold;fill:#2f8fd6">A</text>
<g fill="#2f8fd6"><rect x="1095.500" y="77" width="4" height="4"/><rect x="1110.500" y="77" width="4" height="4"/><rect x="1095.500" y="92" width="4" height="4"/><rect x="1110.500" y="92" width="4" height="4"/></g>

<!-- organiser -->
<rect x="1283" y="84" width="24" height="24" fill="#fbdc9e" stroke="#e8892b" stroke-width="1.600"/>
<rect x="1278" y="73" width="14" height="14" fill="#fff" stroke="#555" stroke-width="1.500"/>
<rect x="1298" y="94" width="14" height="14" fill="#fff" stroke="#555" stroke-width="1.500"/>
<text class="r" x="1263" y="129" textLength="63.600" lengthAdjust="spacingAndGlyphs">Organiser</text><use href="#c" x="1294" y="143"/>
<rect x="1347" y="74" width="35" height="34" rx="3" fill="#f7f7f7" stroke="#666" stroke-width="1.500"/>
<path d="M1367 103 1381 86 1383 88 1371 106Z" fill="#f3f2f1" stroke="#555"/><path d="M1356 110C1360 109 1360 103 1364 101L1371 105C1369 109 1362 112 1356 110Z" fill="#3a8fd1"/>
<text class="r" x="1345" y="129" textLength="38" lengthAdjust="spacingAndGlyphs">Styles</text>
<text class="r" x="1332" y="149" textLength="49" lengthAdjust="spacingAndGlyphs">rapides</text><use href="#c" x="1389" y="143"/>
<path d="M1406 81 1412 74 1419 81 1412 87Z" fill="#fff" stroke="#444" stroke-width="1.300"/><path d="M1414 76C1419 76 1420 80 1420 84" fill="none" stroke="#1e6fb8" stroke-width="2"/><rect x="1402" y="86" width="20" height="5.500" fill="#ffc000"/>
<text class="r" x="1426" y="87" textLength="84" lengthAdjust="spacingAndGlyphs">Remplissage</text><use href="#c" x="1518.500" y="81"/>
<path d="M1403 113V101H1416" fill="none" stroke="#444" stroke-width="1.200"/><path d="M1409 111 1420 100 1423 103 1412 114Z" fill="none" stroke="#2f8fd6" stroke-width="1.300"/><rect x="1402" y="114.500" width="20" height="5.500" fill="#136b8b"/>
<text class="r" x="1426" y="116" textLength="53.500" lengthAdjust="spacingAndGlyphs">Contour</text><use href="#c" x="1487" y="110"/>
<path d="M1403 140 1410 133H1420L1413 147H1405Z" fill="#d9d9d9" stroke="#333" stroke-width="1.400"/><path d="M1406 140H1416M1416 140 1420 133" stroke="#333" fill="none" stroke-width="1.200"/>
<text class="r" x="1426" y="145" textLength="37" lengthAdjust="spacingAndGlyphs">Effets</text><use href="#c" x="1471" y="139"/>

<!-- edition -->
<circle cx="1567" cy="79" r="6.500" fill="none" stroke="#444" stroke-width="1.300"/><path d="M1562 84 1555 91" stroke="#444" stroke-width="1.400"/>
<text class="r" x="1578" y="87" textLength="73" lengthAdjust="spacingAndGlyphs">Rechercher</text>
<text x="1562" y="113" style="font-size:14px;fill:#b05fc2">b</text><text x="1567" y="121" style="font-size:13px;fill:#2f8fd6">c</text>
<path d="M1561 109C1555 111 1554 118 1560 119M1557 117 1560 119 1557 121" fill="none" stroke="#2f8fd6" stroke-width="1.300"/>
<text class="r" x="1578" y="116" textLength="71" lengthAdjust="spacingAndGlyphs">Remplacer</text><use href="#c" x="1667" y="110"/>
<path d="M1558 131V146L1562 142 1565 148 1568 147 1565 141H1570Z" fill="#f7f7f7" stroke="#444" stroke-width="1.200"/>
<text class="r" x="1578" y="145" textLength="83" lengthAdjust="spacingAndGlyphs">Sélectionner</text><use href="#c" x="1668" y="139"/>

<!-- voix -->
<rect x="1720.500" y="74" width="15.500" height="26" rx="4" fill="#84bcee" stroke="#2f8fd6" stroke-width="1.400"/>
<path d="M1716 90V96C1716 102 1722 102 1728 102S1740 102 1740 96V90M1728 102V107M1721 108H1735" fill="none" stroke="#555" stroke-width="1.300"/>
<text class="r" x="1709" y="129" textLength="40" lengthAdjust="spacingAndGlyphs">Dicter</text><use href="#c" x="1728" y="143"/>

<!-- concepteur -->
<rect x="1798" y="80" width="33" height="25" fill="#f7f7f7" stroke="#666" stroke-width="2"/><path d="M1800 87H1830M1821 87V104" stroke="#666" stroke-width="1.300"/>
<path d="M1803 72 1795 89H1801L1794 105 1810 83H1803L1810 72Z" fill="#fbd66b" stroke="#e8892b" stroke-width="1.200"/>
<text class="r" x="1786" y="129" textLength="56" lengthAdjust="spacingAndGlyphs">Idées de</text>
<text class="r" x="1777" y="149" textLength="74" lengthAdjust="spacingAndGlyphs">conception</text>

<!-- ribbon shadow -->
<rect x="0" y="183" width="1927" height="8" fill="url(#sh)"/>

<!-- status -->
<rect x="7" y="986" width="1920" height="27" fill="#f3f2f1"/>
<path d="M7 985.500H1927" stroke="#cacaca" stroke-width="1.500"/>
<text class="s" x="17" y="1005" textLength="140" lengthAdjust="spacingAndGlyphs">Diapositive 35 de 0 .. 44</text>
<path d="M188 1006V994H203V1002M195.500 994V1003" fill="none" stroke="#555" stroke-width="1.300"/><path d="M195 1003 203 1010M203 1003 195 1010" stroke="#555"/>
<path d="M1226 996 1231 991 1236 996M1221 1001H1242M1221 1005H1242M1221 1009H1242" fill="none" stroke="#555" stroke-width="1.200"/>
<text class="s" x="1243.700" y="1005" textLength="34" lengthAdjust="spacingAndGlyphs">Notes</text>
<rect x="1300" y="992" width="15" height="12" fill="none" stroke="#555" stroke-width="1.300"/><circle cx="1311" cy="1005" r="4" fill="#f3f2f1" stroke="#555" stroke-width="1.300"/>
<text class="s" x="1319.500" y="1005" textLength="133.500" lengthAdjust="spacingAndGlyphs">Paramètres d'affichage</text>
<rect x="1495.500" y="993" width="16" height="15" fill="none" stroke="#555" stroke-width="1.500"/><path d="M1499 994V1003H1508" fill="none" stroke="#555"/>
<path class="ic" d="M1545.500 993h6v6h-6zM1555 993h6v6h-6zM1545.500 1002h6v6h-6zM1555 1002h6v6h-6z"/>
<path class="ic" d="M1595 993H1611V1008H1595ZM1603 993V1008M1597 997H1601M1597 1001H1601M1605 997H1609M1605 1001H1609"/>
<path class="ic" d="M1644.500 993H1660M1647 993V1003H1658V993M1652.500 1003V1010M1648 1010H1657"/>
<path d="M1686 1001H1693M1833 1001H1841M1837 997V1005" stroke="#555" stroke-width="1.300"/>
<path d="M1701 1001H1826" stroke="#aaa" stroke-width="1.200"/><path d="M1763.500 998V1004" stroke="#aaa"/>
<rect x="1753" y="994" width="5" height="14" fill="#666"/>
<text class="s" x="1858.500" y="1005" textLength="27.500" lengthAdjust="spacingAndGlyphs">86 %</text>
<rect x="1908" y="996" width="7.500" height="10" fill="none" stroke="#555" stroke-width="1.200"/><path d="M1908 994 1911.700 990 1915.500 994M1908 1008 1911.700 1012 1915.500 1008M1905 998 1902.500 1001 1905 1004M1918.500 998 1921 1001 1918.500 1004" fill="none" stroke="#555" stroke-width="1.100"/>

<!-- taskbar -->
<rect y="1013" x="0" width="1927" height="50" fill="#1d2026"/>
<rect x="0" y="1013" width="7" height="10" fill="#f0f0f0"/>
<g fill="#fff"><path d="M27.500 1032 36 1030.500V1037.500H27.500ZM37 1030.300 48 1028.500V1037.500H37ZM27.500 1038.500H36V1045.500L27.500 1044ZM37 1038.500H48V1048L37 1046Z"/></g>
<rect x="67" y="1013" width="430" height="50" fill="#f3f3f3"/>
<circle cx="95" cy="1033" r="6.500" fill="none" stroke="#222" stroke-width="1.500"/><path d="M90.500 1038 84 1047" stroke="#222" stroke-width="1.700"/>
<text x="116" y="1044" textLength="213" lengthAdjust="spacingAndGlyphs" style="font-size:18.500px;fill:#333">Taper ici pour rechercher</text>
<circle cx="527" cy="1038" r="8.500" fill="none" stroke="#fff" stroke-width="2.500"/>
<path d="M577 1029H590M577 1047H590M579 1033H588V1043H579ZM592 1033V1036M592 1040V1043" fill="none" stroke="#fff" stroke-width="1.300"/>
<!-- folder -->
<path d="M637 1027H647L649 1030H665V1049H637Z" fill="#f8c73a"/><path d="M637 1027H647L649 1030H637Z" fill="#e0a526"/><path d="M644 1049V1042H658V1049H654V1045H648V1049Z" fill="#2a8fd9"/>
<!-- outlook -->
<rect x="706" y="1024" width="22" height="23" fill="#1c7fd1"/><rect x="717" y="1024" width="11" height="11" fill="#4db0ec"/><rect x="698" y="1030" width="14" height="15" fill="#0f5ca8"/>
<text x="701" y="1042" style="font-size:11px;font-weight:bold;fill:#fff">O</text>
<rect x="712" y="1038" width="18" height="15" fill="#e8c398"/><path d="M712 1038 721 1047 730 1038" fill="none" stroke="#fff" stroke-width="1.300"/>
<!-- snip -->
<ellipse cx="773" cy="1030" rx="11" ry="10" fill="#f3e6e4" stroke="#c8423c" stroke-width="2"/><path d="M771 1024 781 1048M779 1026 771 1048" stroke="#666" stroke-width="1.500"/><circle cx="769" cy="1036" r="5" fill="#555"/><circle cx="776" cy="1050" r="3.500" fill="none" stroke="#1e90ce" stroke-width="1.700"/><circle cx="782" cy="1048" r="3.500" fill="none" stroke="#1e90ce" stroke-width="1.700"/>
<!-- firefox -->
<circle cx="837" cy="1038" r="14" fill="#f2762a"/><path d="M837 1023C844 1027 851 1033 851 1040 848 1030 842 1029 837 1023Z" fill="#ffc83d"/><circle cx="838" cy="1038" r="6.500" fill="#6a2fa0"/><path d="M825 1032C828 1044 838 1052 850 1044 842 1054 825 1052 823 1038Z" fill="#e22850"/>
<!-- teams -->
<rect x="884" y="1029" width="16" height="16" fill="#4b53bc"/><rect x="898" y="1031" width="12" height="14" rx="3" fill="#7b83eb"/><circle cx="902" cy="1024" r="4" fill="#7b83eb"/><circle cx="909" cy="1027" r="3" fill="#5059c9"/>
<text x="888" y="1042" style="font-size:11px;font-weight:bold;fill:#fff">T</text>
<circle cx="908" cy="1048" r="6.500" fill="#fff"/><circle cx="908" cy="1048" r="5" fill="#6cb33f"/><path d="M905.500 1048 907.500 1050 911 1046" stroke="#fff" fill="none"/>
<!-- word -->
<rect x="951" y="1025" width="24" height="25" fill="#2b7cd3"/><rect x="951" y="1033" width="24" height="8" fill="#185abd"/><rect x="951" y="1041" width="24" height="9" fill="#103f91"/><rect x="951" y="1025" width="24" height="8" fill="#41a5ee"/><rect x="946" y="1030" width="14" height="14" fill="#185abd"/>
<text x="947.500" y="1041" style="font-size:11px;font-weight:bold;fill:#fff">W</text>
<!-- headphones -->
<rect x="1008" y="1023" width="30" height="30" rx="2" fill="#3a3a3a" stroke="#888"/><path d="M1015 1040V1035C1015 1025 1031 1025 1031 1035V1040" fill="none" stroke="#fff" stroke-width="2"/><path d="M1014 1050V1047M1018 1050V1045M1022 1050V1046M1026 1050V1044M1030 1050V1046" stroke="#aaa"/>
<!-- excel -->
<rect x="1075" y="1024" width="24" height="26" fill="#21a366"/><rect x="1087" y="1024" width="12" height="9" fill="#33c481"/><rect x="1075" y="1041" width="24" height="9" fill="#107c41"/><rect x="1070" y="1030" width="13" height="14" fill="#107c41"/>
<text x="1073" y="1041" style="font-size:11px;font-weight:bold;fill:#fff">X</text>
<!-- notepad -->
<path d="M1137 1024 1157 1028 1155 1052 1134 1047Z" fill="#8ec9e0"/><path d="M1142 1026 1157 1028 1155 1052 1146 1050Z" fill="#ddeef5"/><path d="M1148 1051 1156 1053 1158 1040Z" fill="#c7c28d"/>
<!-- ppt -->
<rect x="1179" y="1013" width="61" height="50" fill="#4b4d52"/>
<circle cx="1210" cy="1038" r="14" fill="#ed6c47"/><path d="M1210 1024A14 14 0 0 1 1224 1038H1210Z" fill="#ff8f6b"/><path d="M1197 1045A14 14 0 0 0 1224 1038H1210Z" fill="#d35230"/><rect x="1194" y="1030" width="13" height="15" fill="#c43e1c"/>
<text x="1196.500" y="1042" style="font-size:11px;font-weight:bold;fill:#fff">P</text>
<!-- underline -->
<g fill="#76b9ed"><rect x="626" y="1060" width="51" height="3"/><rect x="688" y="1060" width="51" height="3"/><rect x="750" y="1060" width="51" height="3"/><rect x="812" y="1060" width="51" height="3"/><rect x="874" y="1060" width="51" height="3"/><rect x="937" y="1060" width="51" height="3"/><rect x="998" y="1060" width="51" height="3"/><rect x="1060" y="1060" width="51" height="3"/><rect x="1122" y="1060" width="51" height="3"/><rect x="1179" y="1060" width="61" height="3"/></g>
<!-- tray -->
<path d="M1656 1041 1664 1033 1672 1041" fill="none" stroke="#fff" stroke-width="1.300"/>
<path d="M1688 1034H1704V1043H1688ZM1691 1034V1029M1695 1034V1029" fill="#ddd" stroke="#fff"/>
<path d="M1716 1028H1733V1044H1716ZM1724 1044V1049M1719 1049H1729" fill="none" stroke="#fff" stroke-width="1.300"/>
<path d="M1745 1034H1749L1753 1030V1046L1749 1042H1745ZM1756 1034C1758 1036 1758 1040 1756 1042M1759 1030C1763 1034 1763 1042 1759 1046" fill="none" stroke="#ccc" stroke-width="1.200"/>
<text x="1797.500" y="1032" textLength="34.500" lengthAdjust="spacingAndGlyphs" style="font-size:15px;fill:#fff">11:40</text>
<text x="1777" y="1055" textLength="75" lengthAdjust="spacingAndGlyphs" style="font-size:15px;fill:#fff">05/02/2021</text>
<path d="M1876 1028H1895V1043H1881L1876 1048Z" fill="#fff"/><path d="M1879 1033H1892M1879 1037H1892" stroke="#1d2026"/>
<circle cx="1895.500" cy="1048" r="10.500" fill="#444" stroke="#ccc" stroke-width="1.200"/>
<text x="1889" y="1053" textLength="13" lengthAdjust="spacingAndGlyphs" style="font-size:14px;fill:#fff">13</text>
</svg>
</body></html>
